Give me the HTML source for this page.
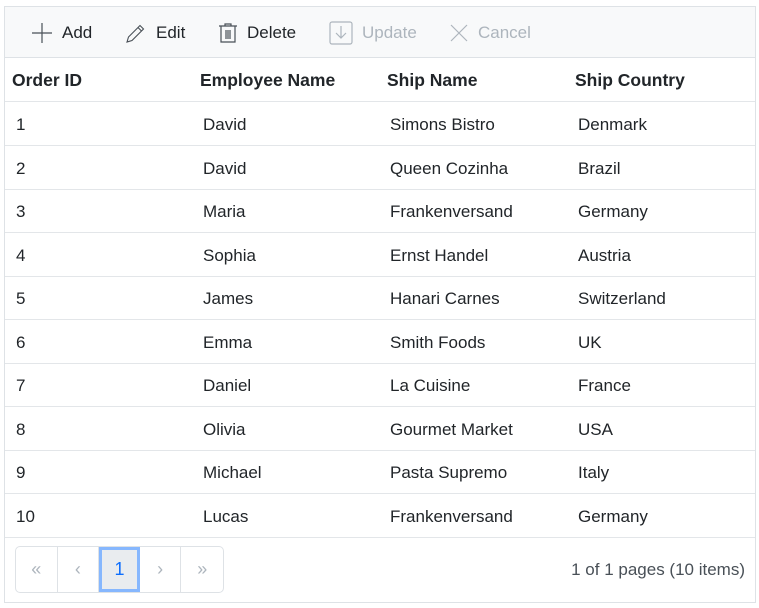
<!DOCTYPE html>
<html><head><style>
*{margin:0;padding:0;box-sizing:border-box}
body{width:759px;height:608px;background:#fff;font-family:"Liberation Sans",sans-serif;position:relative;overflow:hidden}
.g{position:absolute;left:4px;top:6px;width:752px;height:597px;border:1px solid #dee2e6}
.tb{position:absolute;left:0;top:0;width:750px;height:51px;background:#f8f9fa;border-bottom:1px solid #dee2e6}
.ti{position:absolute;top:13px;height:26px;font-size:17px;color:#212529;display:flex;align-items:center}
.ti svg{margin-right:9px}
.dis{color:#adb5bd}
.row{position:absolute;left:0;width:750px;height:44px;border-bottom:1px solid #e3e6e9;font-size:17px;color:#212529}
.row span{position:absolute;top:13px}
.hd span{font-weight:bold;color:#212529;font-size:17.5px}
.pg{position:absolute;left:0;top:531px;width:750px;height:64px;background:#fff}
.pb{position:absolute;left:10px;top:8px;width:209px;height:47px;border:1px solid #dee2e6;border-radius:5px;display:flex}
.pb div{width:42px;height:45px;border-right:1px solid #dee2e6;color:#adb5bd;font-size:18px;display:flex;align-items:center;justify-content:center}
.pb div:last-child{border-right:none}
.pb .a{background:#e9ecef;border:3px solid #86b7fe;color:#0d6efd;width:41px}
.info{position:absolute;right:10px;top:22px;font-size:17px;color:#495057}
</style></head><body>
<div class="g">
<div class="tb">
<div class="ti" style="left:26px"><svg width="22" height="22" viewBox="0 0 22 22"><path d="M11 1v20M1 11h20" stroke="#495057" stroke-width="1.2"/></svg>Add</div>
<div class="ti" style="left:120px"><svg width="22" height="22" viewBox="0 0 22 22" fill="none" stroke="#495057" stroke-width="1.1"><path d="M2 20l1.5-5L15 3.5l3.5 3.5L7 18.5z M13 5.5l3.5 3.5"/></svg>Edit</div>
<div class="ti" style="left:213px"><svg width="20" height="22" viewBox="0 0 20 22" fill="none" stroke="#495057" stroke-width="1.2"><path d="M1 4h18M7 4V2h6v2M3 4v16h14V4M8 8v9M10 8v9M12 8v9"/></svg>Delete</div>
<div class="ti dis" style="left:324px"><svg width="24" height="24" viewBox="0 0 24 24" fill="none" stroke="#adb5bd" stroke-width="1.2"><rect x="1" y="1" width="22" height="22" rx="2"/><path d="M12 5v12M7 12l5 5 5-5"/></svg>Update</div>
<div class="ti dis" style="left:444px"><svg width="20" height="20" viewBox="0 0 20 20"><path d="M2 2l16 16M18 2L2 18" stroke="#adb5bd" stroke-width="1.2"/></svg>Cancel</div>
</div>
<div class="row hd" style="top:51px"><span style="left:7px;top:12px">Order ID</span><span style="left:195px;top:12px">Employee Name</span><span style="left:382px;top:12px">Ship Name</span><span style="left:570px;top:12px">Ship Country</span></div>
<div class="row" style="top:95px"><span style="left:11px">1</span><span style="left:198px">David</span><span style="left:385px">Simons Bistro</span><span style="left:573px">Denmark</span></div>
<div class="row" style="top:139px"><span style="left:11px">2</span><span style="left:198px">David</span><span style="left:385px">Queen Cozinha</span><span style="left:573px">Brazil</span></div>
<div class="row" style="top:182px"><span style="left:11px">3</span><span style="left:198px">Maria</span><span style="left:385px">Frankenversand</span><span style="left:573px">Germany</span></div>
<div class="row" style="top:226px"><span style="left:11px">4</span><span style="left:198px">Sophia</span><span style="left:385px">Ernst Handel</span><span style="left:573px">Austria</span></div>
<div class="row" style="top:269px"><span style="left:11px">5</span><span style="left:198px">James</span><span style="left:385px">Hanari Carnes</span><span style="left:573px">Switzerland</span></div>
<div class="row" style="top:313px"><span style="left:11px">6</span><span style="left:198px">Emma</span><span style="left:385px">Smith Foods</span><span style="left:573px">UK</span></div>
<div class="row" style="top:356px"><span style="left:11px">7</span><span style="left:198px">Daniel</span><span style="left:385px">La Cuisine</span><span style="left:573px">France</span></div>
<div class="row" style="top:400px"><span style="left:11px">8</span><span style="left:198px">Olivia</span><span style="left:385px">Gourmet Market</span><span style="left:573px">USA</span></div>
<div class="row" style="top:443px"><span style="left:11px">9</span><span style="left:198px">Michael</span><span style="left:385px">Pasta Supremo</span><span style="left:573px">Italy</span></div>
<div class="row" style="top:487px"><span style="left:11px">10</span><span style="left:198px">Lucas</span><span style="left:385px">Frankenversand</span><span style="left:573px">Germany</span></div>
<div class="pg">
<div class="pb"><div>«</div><div>‹</div><div class="a">1</div><div>›</div><div>»</div></div>
<div class="info">1 of 1 pages (10 items)</div>
</div>
</div>
</body></html>
